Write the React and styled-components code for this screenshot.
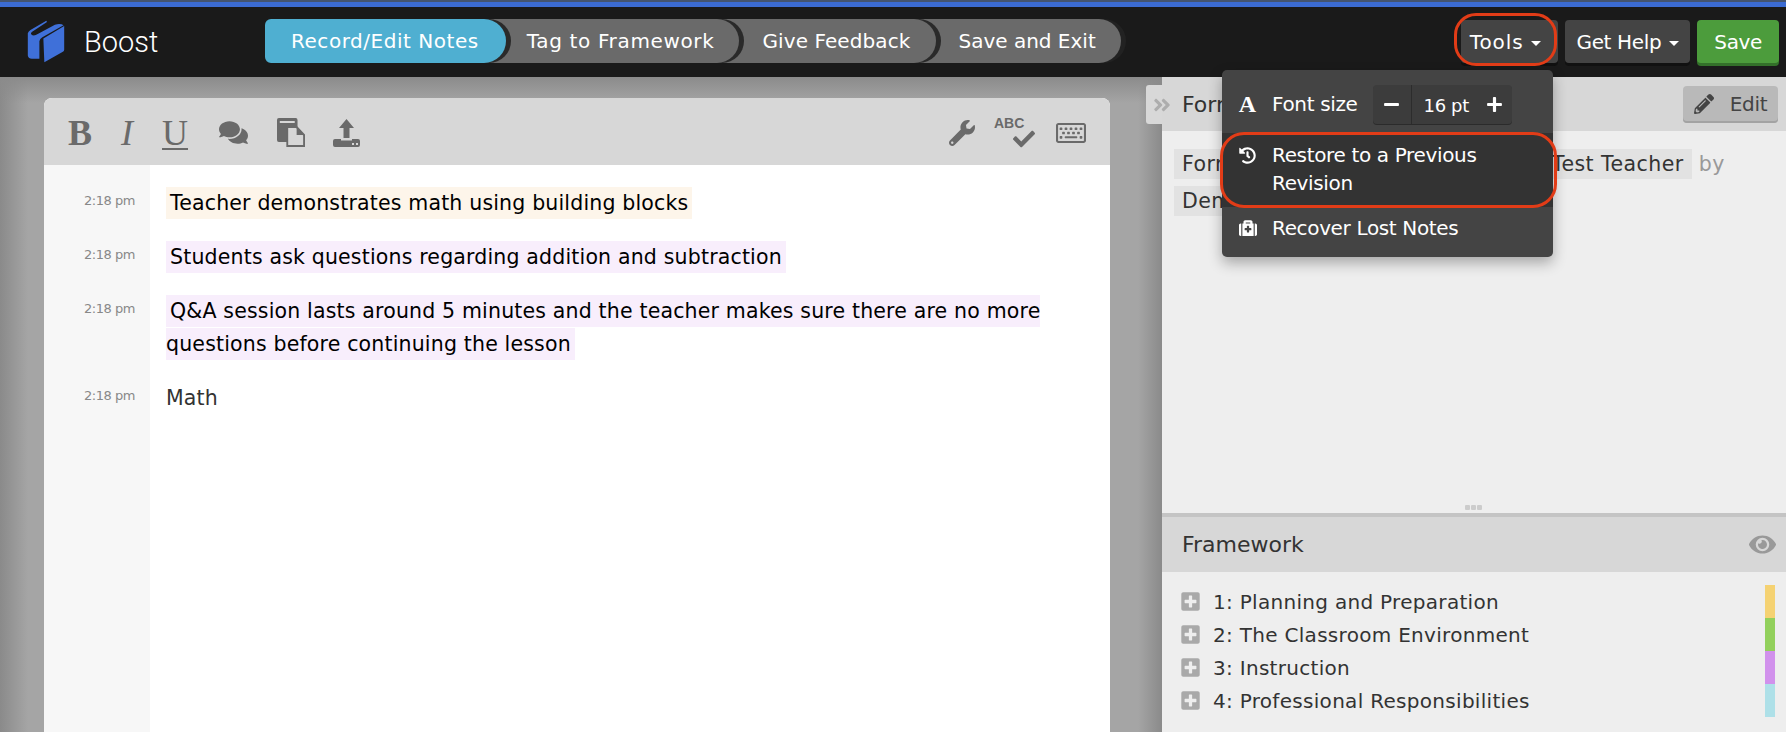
import styled, { createGlobalStyle } from "styled-components";
import {
  FaAngleDoubleRight,
  FaCheck,
  FaComments,
  FaEye,
  FaHistory,
  FaMedkit,
  FaMinus,
  FaPencilAlt,
  FaPlus,
  FaPlusSquare,
  FaRegKeyboard,
  FaWrench,
} from "react-icons/fa";

const steps = [
  { id: 0, label: "Record/Edit Notes", active: true, pad: "0 27px 0 26px", spacing: 0.53 },
  { id: 1, label: "Tag to Framework", pad: "0 25px 0 43px", spacing: 0.65 },
  { id: 2, label: "Give Feedback", pad: "0 26px 0 45px", spacing: 0.09 },
  { id: 3, label: "Save and Exit", pad: "0 25px 0 44px", spacing: 0 },
];

const notes = [
  { id: 0, text: "Teacher demonstrates math using building blocks", color: "#fdf5ea" },
  { id: 1, text: "Students ask questions regarding addition and subtraction", color: "#f8eefc" },
  {
    id: 2,
    text: "Q&A session lasts around 5 minutes and the teacher makes sure there are no more questions before continuing the lesson",
    color: "#f8eefc",
  },
  { id: 3, text: "Math" },
];

const domains = [
  { id: 1, name: "1: Planning and Preparation", color: "#f5d272" },
  { id: 2, name: "2: The Classroom Environment", color: "#92d05c" },
  { id: 3, name: "3: Instruction", color: "#d191ec" },
  { id: 4, name: "4: Professional Responsibilities", color: "#aee0e8" },
];

const GlobalStyle = createGlobalStyle`
  html, body {
    margin: 0;
    padding: 0;
    background: #a0a0a0;
  }
  * {
    box-sizing: border-box;
  }
`;

const Page = styled.div`
  position: relative;
  width: 1786px;
  height: 732px;
  overflow: hidden;
  display: flex;
  flex-direction: column;
  font-family: "DejaVu Sans", sans-serif;
  letter-spacing: -0.35px;
`;

const TopBar = styled.header`
  height: 77px;
  flex: none;
  display: flex;
  align-items: flex-start;
  background: #1a1a1a;
  border-top: 7px solid #3b6bd2;
  position: relative;
  &::before {
    content: "";
    position: absolute;
    top: -7px;
    left: 0;
    right: 0;
    height: 2px;
    background: #44546f;
  }
`;

const Brand = styled.div`
  width: 265px;
  height: 70px;
  flex: none;
  display: flex;
  align-items: center;
  padding: 0 0 1px 27px;
  gap: 19px;
  color: #fff;
  font-family: Roboto, sans-serif;
  font-weight: 300;
  font-size: 29px;
  letter-spacing: 0;
`;

const Steps = styled.nav`
  display: flex;
  margin-top: 12px;
`;

const Step = styled.div`
  height: 44px;
  display: flex;
  align-items: center;
  position: relative;
  z-index: ${({ $order }) => 10 - $order};
  margin-left: ${({ $order }) => ($order ? "-22px" : 0)};
  padding: ${({ $pad }) => $pad};
  border-radius: ${({ $active }) => ($active ? "6px 22px 22px 6px" : "0 22px 22px 0")};
  background: ${({ $active }) => ($active ? "#4fafd1" : "#6a6a6a")};
  box-shadow: 5px 0 0 ${({ $order }) => ($order === 3 ? "#222" : "#2a2a2a")};
  color: #fff;
  font-size: 20px;
  letter-spacing: ${({ $spacing }) => $spacing}px;
  white-space: nowrap;
`;

const HeaderActions = styled.div`
  margin-left: auto;
  margin-top: 13px;
  display: flex;
  gap: 7px;
  padding-right: 7px;
`;

const HeaderButton = styled.button`
  height: 43px;
  padding: 0 ${({ $pad }) => $pad || 11}px;
  display: flex;
  align-items: center;
  gap: 8px;
  border: 0;
  border-radius: 4px;
  background: ${({ $green }) => ($green ? "#4c9c3c" : "#444")};
  box-shadow: 0 3px 0 ${({ $green }) => ($green ? "#33702a" : "#111")};
  color: #fff;
  font: inherit;
  font-size: 20px;
  letter-spacing: ${({ $spacing }) => $spacing ?? -0.35}px;
`;

const ToolsButton = styled(HeaderButton)`
  padding: 0 17px 0 9px;
`;

const Caret = styled.i`
  width: 0;
  height: 0;
  margin-top: 4px;
  border-left: 5px solid transparent;
  border-right: 5px solid transparent;
  border-top: 5px solid #fff;
`;

const Main = styled.div`
  flex: 1;
  display: flex;
  min-height: 0;
`;

const Workspace = styled.section`
  width: 1162px;
  flex: none;
  padding: 21px 52px 0 44px;
  background:
    linear-gradient(#8b8b8b, rgba(139, 139, 139, 0) 26px),
    linear-gradient(90deg, #8a8a8a, rgba(138, 138, 138, 0) 28px),
    linear-gradient(270deg, #8a8a8a, rgba(138, 138, 138, 0) 24px),
    #a5a5a5;
`;

const Editor = styled.div`
  height: 100%;
  display: flex;
  flex-direction: column;
  border-radius: 8px 8px 0 0;
  overflow: hidden;
  background: #fff;
`;

const Toolbar = styled.div`
  height: 67px;
  flex: none;
  display: flex;
  align-items: center;
  gap: 29px;
  padding: 2px 24px 0 24px;
  background: #d7d7d7;
  color: #6a6a6a;
`;

const FormatLetter = styled.span`
  font-family: "Liberation Serif", serif;
  font-size: 36px;
  line-height: 36px;
  letter-spacing: 0;
  font-weight: ${({ $bold }) => ($bold ? 700 : 400)};
  font-style: ${({ $italic }) => ($italic ? "italic" : "normal")};
  text-decoration: ${({ $underline }) => ($underline ? "underline" : "none")};
  text-decoration-thickness: 2px;
  text-underline-offset: 3px;
`;

const CommentIcon = styled(FaComments)`
  margin-left: 2px;
`;

const ToolbarSpacer = styled.div`
  flex: 1;
`;

const RightTools = styled.div`
  display: flex;
  align-items: center;
  gap: 21px;
`;

const SpellIcon = styled.div`
  position: relative;
  width: 41px;
  height: 34px;
  margin-left: -2px;
  font-family: "Liberation Sans", sans-serif;
  font-weight: 700;
  font-size: 14px;
  letter-spacing: 0;
  line-height: 14px;
  svg {
    position: absolute;
    right: 0;
    bottom: 0;
  }
`;

const NoteList = styled.div`
  flex: 1;
  display: flex;
  flex-direction: column;
  background: linear-gradient(90deg, #f7f7f7 106px, #fff 106px);
  padding-top: 22px;
`;

const NoteRow = styled.div`
  display: flex;
  margin-bottom: 21px;
`;

const NoteTime = styled.div`
  width: 106px;
  flex: none;
  padding: 6px 15px 0 0;
  text-align: right;
  color: #888;
  font-size: 13px;
  letter-spacing: -0.45px;
`;

const NoteText = styled.div`
  width: 890px;
  margin-left: 16px;
  font-size: 20.5px;
  letter-spacing: 0.17px;
  line-height: 33px;
  color: ${({ $plain }) => ($plain ? "#333" : "#000")};
  span {
    background: ${({ $color }) => $color || "transparent"};
    padding: 4px ${({ $plain }) => ($plain ? 0 : 4)}px;
  }
`;

const SidePanel = styled.aside`
  flex: 1;
  display: flex;
  flex-direction: column;
  position: relative;
  background: #eee;
  color: #333;
`;

const CollapseTab = styled.div`
  position: absolute;
  z-index: 2;
  left: -16px;
  top: 8px;
  width: 16px;
  height: 39px;
  display: flex;
  align-items: center;
  padding-left: 6px;
  background: #d8d8d8;
  border-radius: 3px 0 0 3px;
  color: #adadad;
  svg {
    flex: none;
    font-size: 20px;
  }
`;

const PanelHeader = styled.div`
  height: 54px;
  flex: none;
  display: flex;
  align-items: center;
  justify-content: space-between;
  padding: 0 8px 0 20px;
  background: #d7d7d7;
  font-size: 22px;
  letter-spacing: 0;
`;

const EditButton = styled.button`
  width: 95px;
  height: 37px;
  display: flex;
  align-items: center;
  justify-content: center;
  gap: 16px;
  border: 0;
  border-radius: 4px;
  background: #b9b9b9;
  box-shadow: inset 0 -2px 0 #a3a3a3;
  color: #444;
  font: inherit;
  font-size: 20px;
  letter-spacing: -0.35px;
`;

const SummaryBody = styled.div`
  height: 382px;
  flex: none;
  position: relative;
  padding: 15px 12px 0 20px;
  font-size: 20.5px;
  letter-spacing: 0.45px;
  line-height: 37px;
  color: #999;
`;

const Chip = styled.span`
  background: #e2e2e2;
  color: #333;
  padding: 3px 8px;
  margin-left: -8px;
`;

const Grip = styled.div`
  position: absolute;
  bottom: 3px;
  left: 50%;
  margin-left: -9px;
  display: flex;
  gap: 1px;
  i {
    width: 5px;
    height: 5px;
    border-radius: 1px;
    background: #ccc;
  }
`;

const FrameworkHeader = styled(PanelHeader)`
  border-top: 4px solid #c4c4c4;
  height: 59px;
  padding-right: 10px;
  color: #333;
  svg {
    color: #999;
    font-size: 27px;
  }
`;

const FrameworkBody = styled.div`
  display: flex;
  padding: 13px 11px 0 18px;
  justify-content: space-between;
`;

const DomainList = styled.ul`
  list-style: none;
  margin: 0;
  padding: 0;
`;

const Domain = styled.li`
  height: 33px;
  display: flex;
  align-items: center;
  gap: 12px;
  font-size: 20px;
  letter-spacing: 0.3px;
  svg {
    color: #a9a9a9;
    font-size: 21px;
  }
`;

const ColorBar = styled.div`
  width: 10px;
  display: flex;
  flex-direction: column;
`;

const ColorBlock = styled.div`
  height: 33px;
  background: ${({ $color }) => $color};
`;

const ToolsMenu = styled.div`
  position: absolute;
  top: 70px;
  left: 1222px;
  width: 331px;
  height: 187px;
  z-index: 20;
  display: flex;
  flex-direction: column;
  padding-top: 15px;
  background: #444;
  border-radius: 5px;
  box-shadow: 0 6px 14px rgba(0, 0, 0, 0.3);
  color: #fff;
  font-size: 20px;
`;

const FontRow = styled.div`
  height: 39px;
  margin-bottom: 9px;
  display: flex;
  align-items: center;
  gap: 15px;
  padding: 0 41px 0 16px;
  white-space: nowrap;
`;

const FontLabel = styled.span`
  margin-top: -2px;
`;

const MenuRow = styled.div`
  display: flex;
  gap: 15px;
  padding: ${({ $pad }) => $pad};
  line-height: 28px;
  background: ${({ $active }) => ($active ? "#333" : "transparent")};
`;

const MenuIcon = styled.span`
  width: 19px;
  height: 28px;
  flex: none;
  display: flex;
  align-items: center;
  justify-content: center;
  font-size: ${({ $size }) => $size || 18}px;
`;

const MenuLetter = styled(MenuIcon)`
  font-family: "Liberation Serif", serif;
  font-size: 24px;
  font-weight: 700;
  letter-spacing: 0;
`;

const Stepper = styled.div`
  width: 141px;
  height: 39px;
  margin-left: auto;
  display: flex;
  align-items: center;
  background: #3c3c3c;
  border-radius: 4px;
  box-shadow: 0 1px 0 #2b2b2b;
  font-size: 18px;
  svg {
    font-size: 17px;
  }
`;

const StepperMinus = styled.div`
  width: 39px;
  height: 100%;
  display: flex;
  align-items: center;
  justify-content: center;
  border-right: 1px solid #2c2c2c;
`;

const StepperValue = styled.div`
  flex: 1;
  padding: 1px 0 0 12px;
`;

const StepperPlus = styled.div`
  width: 26px;
  display: flex;
`;

const Ring = styled.div`
  position: absolute;
  z-index: 30;
  pointer-events: none;
  border: 3px solid #e23c17;
  border-radius: ${({ $radius }) => $radius}px;
  left: ${({ $left }) => $left}px;
  top: ${({ $top }) => $top}px;
  width: ${({ $width }) => $width}px;
  height: ${({ $height }) => $height}px;
`;

const BookLogo = () => (
  <svg width="38" height="43" viewBox="38 28 114 130" fill="#3f70d9">
    <path d="M40 68 Q42 62 48 58 L96 30 L98 34 L52 64 Q46 70 54 74 Q62 76 70 70 L122 42 Q140 38 148 44 L84 80 Q76 84 75 92 L75 145 L52 145 Q42 145 40 135 Z" />
    <path d="M87 84 L150 46 L150 118 Q150 122 146 124 L90 156 Z" />
  </svg>
);

const PasteIcon = () => (
  <svg width="28" height="29" viewBox="0 0 30 29" preserveAspectRatio="none" fill="currentColor">
    <path d="M2 0 H20 Q22 0 22 2 V24 H2 Q0 24 0 22 V2 Q0 0 2 0 Z" />
    <rect x="3" y="3" width="16" height="2" fill="#d7d7d7" />
    <path d="M11 9 H21 L29 17 V28 H11 Z" fill="#d7d7d7" stroke="currentColor" strokeWidth="2" />
    <path d="M21 9 V17 H29 Z" />
  </svg>
);

const UploadSvg = styled.svg`
  margin-left: -1px;
`;

const UploadIcon = () => (
  <UploadSvg width="27" height="28" viewBox="0 0 27 28" fill="currentColor">
    <path d="M13.5 0 L21 9 L16.5 9 L16.5 19 L10.5 19 L10.5 9 L6 9 Z" />
    <path d="M2 20 L8 20 L8 21.5 L19 21.5 L19 20 L25 20 Q27 20 27 22 L27 26 Q27 28 25 28 L2 28 Q0 28 0 26 L0 22 Q0 20 2 20 Z M19 24 L19 26 L21 26 L21 24 Z M23 24 L23 26 L25 26 L25 24 Z" fillRule="evenodd" />
  </UploadSvg>
);

export default function App() {
  return (
    <>
      <GlobalStyle />
      <Page>
        <TopBar>
          <Brand>
            <BookLogo />
            Boost
          </Brand>
          <Steps>
            {steps.map((step) => (
              <Step key={step.id} $order={step.id} $active={step.active} $pad={step.pad} $spacing={step.spacing}>
                {step.label}
              </Step>
            ))}
          </Steps>
          <HeaderActions>
            <ToolsButton $spacing={0.9}>
              Tools <Caret />
            </ToolsButton>
            <HeaderButton>
              Get Help <Caret />
            </HeaderButton>
            <HeaderButton $green $pad={17}>
              Save
            </HeaderButton>
          </HeaderActions>
        </TopBar>
        <Main>
          <Workspace>
            <Editor>
              <Toolbar>
                <FormatLetter $bold>B</FormatLetter>
                <FormatLetter $italic>I</FormatLetter>
                <FormatLetter $underline>U</FormatLetter>
                <CommentIcon size={29} />
                <PasteIcon />
                <UploadIcon />
                <ToolbarSpacer />
                <RightTools>
                  <FaWrench size={26} />
                  <SpellIcon>
                    ABC
                    <FaCheck size={22} />
                  </SpellIcon>
                  <FaRegKeyboard size={30} />
                </RightTools>
              </Toolbar>
              <NoteList>
                {notes.map((note) => (
                  <NoteRow key={note.id}>
                    <NoteTime>2:18 pm</NoteTime>
                    <NoteText $color={note.color} $plain={!note.color}>
                      <span>{note.text}</span>
                    </NoteText>
                  </NoteRow>
                ))}
              </NoteList>
            </Editor>
          </Workspace>
          <SidePanel>
            <CollapseTab>
              <FaAngleDoubleRight />
            </CollapseTab>
            <PanelHeader>
              Formal Observation
              <EditButton>
                <FaPencilAlt size={20} />
                Edit
              </EditButton>
            </PanelHeader>
            <SummaryBody>
              <Chip>Formal Classroom Observation</Chip> of <Chip>Test Teacher</Chip> by <Chip>Demo Admin</Chip>
              <Grip>
                <i />
                <i />
                <i />
              </Grip>
            </SummaryBody>
            <FrameworkHeader>
              Framework
              <FaEye />
            </FrameworkHeader>
            <FrameworkBody>
              <DomainList>
                {domains.map((domain) => (
                  <Domain key={domain.id}>
                    <FaPlusSquare />
                    {domain.name}
                  </Domain>
                ))}
              </DomainList>
              <ColorBar>
                {domains.map((domain) => (
                  <ColorBlock key={domain.id} $color={domain.color} />
                ))}
              </ColorBar>
            </FrameworkBody>
          </SidePanel>
        </Main>
        <ToolsMenu>
          <FontRow>
            <MenuLetter>A</MenuLetter>
            <FontLabel>Font size</FontLabel>
            <Stepper>
              <StepperMinus>
                <FaMinus />
              </StepperMinus>
              <StepperValue>16 pt</StepperValue>
              <StepperPlus>
                <FaPlus />
              </StepperPlus>
            </Stepper>
          </FontRow>
          <MenuRow $active $pad="8px 16px 10px">
            <MenuIcon $size={17}>
              <FaHistory />
            </MenuIcon>
            <span>
              Restore to a Previous
              <br />
              Revision
            </span>
          </MenuRow>
          <MenuRow $pad="7px 16px">
            <MenuIcon>
              <FaMedkit />
            </MenuIcon>
            <span>Recover Lost Notes</span>
          </MenuRow>
        </ToolsMenu>
        <Ring $left={1454} $top={13} $width={103} $height={53} $radius={22} />
        <Ring $left={1220} $top={132} $width={337} $height={76} $radius={24} />
      </Page>
    </>
  );
}
